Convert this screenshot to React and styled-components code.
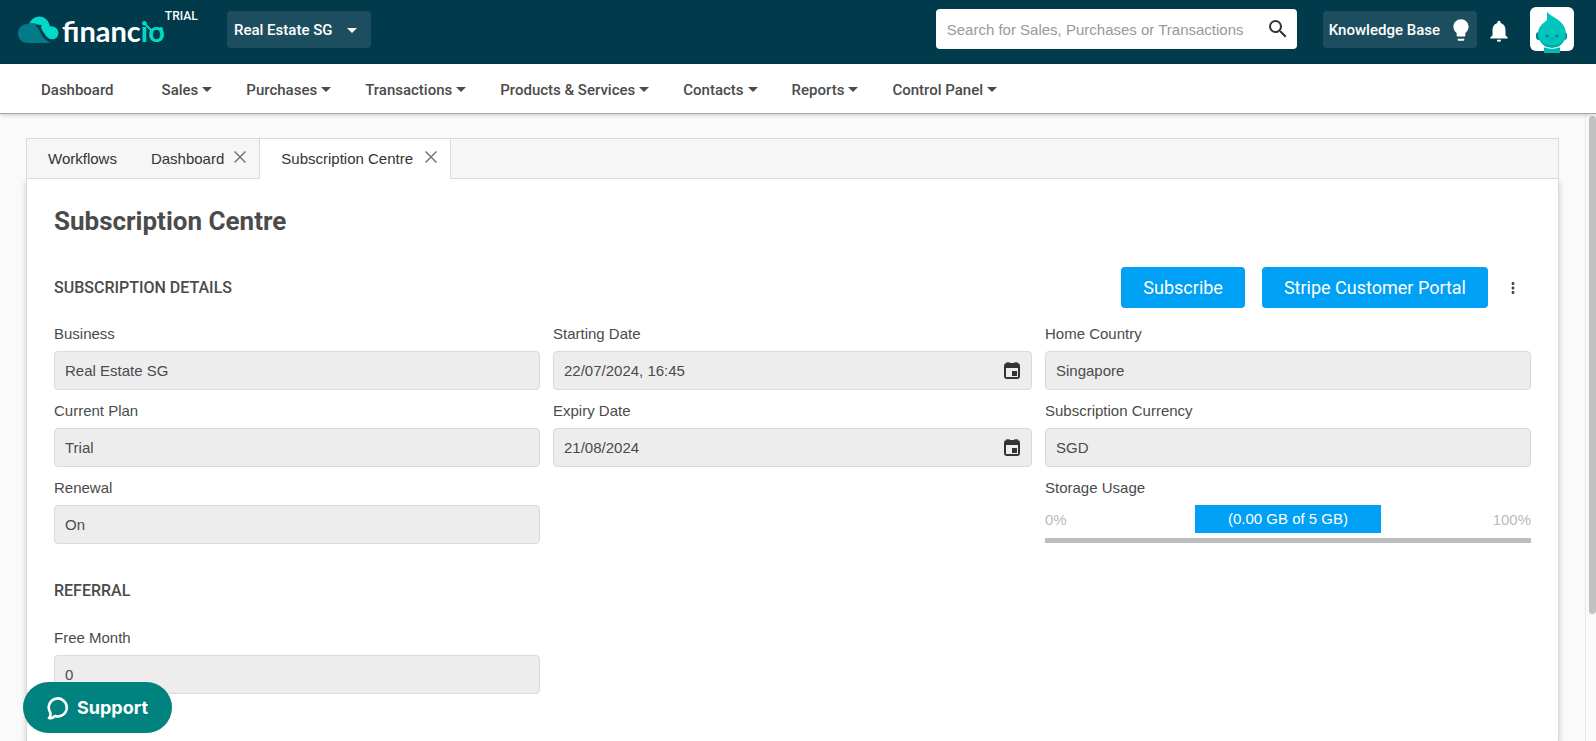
import React from "react";
import { styled, createGlobalStyle } from "styled-components";
import {
  MdArrowDropDown,
  MdLightbulb,
  MdMoreVert,
  MdNotifications,
  MdSearch,
} from "react-icons/md";

const MENU = [
  { label: "Dashboard" },
  { label: "Sales", dropdown: true },
  { label: "Purchases", dropdown: true },
  { label: "Transactions", dropdown: true },
  { label: "Products & Services", dropdown: true },
  { label: "Contacts", dropdown: true },
  { label: "Reports", dropdown: true },
  { label: "Control Panel", dropdown: true },
];

const TABS = [
  { label: "Workflows" },
  { label: "Dashboard", closable: true },
  { label: "Subscription Centre", closable: true, active: true },
];

const Logo = () => (
  <LogoLink href="#" aria-label="financio">
    <svg width="42" height="30" viewBox="0 0 42 30">
      <path
        d="M11 11A10.500 10.500 0 0 1 31.500 10.500C31.500 12 32 12.500 33 12.200A7 7 0 0 1 40.500 19C40 26 33 27 29 23C25 19 24 13 18 10.500Z"
        fill="#00d8c8"
      />
      <path
        d="M10 29C4 29 0 25 0 19.500C0 14 4 10 9.500 10C14 8 20 9 23 14C25 20 27 27 33 29Z"
        fill="#007b87"
      />
      <path d="M17 10.500L23.500 11L23 14.500C25 20 28 24.500 34 27C29 29 24 23 22 17Z" fill="#003a4b" />
    </svg>
    <Wordmark>
      financ<em>io</em>
      <svg width="24" height="24" viewBox="0 0 24 24">
        <path d="M4 5L11 12" stroke="#00d8c8" strokeWidth="2" />
        <circle cx="20" cy="10" r="2" fill="#00d8c8" />
      </svg>
    </Wordmark>
    <Plan>TRIAL</Plan>
  </LogoLink>
);

const Avatar = () => (
  <AvatarButton aria-label="Account">
    <svg width="44" height="46" viewBox="0 0 44 46">
      <rect x="6" y="25" width="31" height="8" rx="3" fill="#007f8c" />
      <path
        d="M17 5C23 11 36 14 36 27C36 35 30 40 22 40C14 40 8 35 8 27C8 20 12 17 17 13Z"
        fill="#00c5bd"
      />
      <path d="M10 33C15 40 29 40 34 33C32 38 28 41 22 41C16 41 12 38 10 33Z" fill="#00aaa7" />
      <path d="M14 40Q22 43 30 40V46H14Z" fill="#00b8b4" />
      <path d="M14 40Q22 43 30 40" fill="none" stroke="#bff1ee" strokeWidth="1" />
      <circle cx="17" cy="29" r="1.500" fill="#00828b" />
      <circle cx="27" cy="29" r="1.500" fill="#00828b" />
      <path d="M20 31Q22 32 24 31" fill="none" stroke="#00a5a3" />
    </svg>
  </AvatarButton>
);

const CalendarIcon = () => (
  <svg width="18" height="18" viewBox="0 0 18 18">
    <path
      d="M4 1H14Q17 1 17 4V14Q17 17 14 17H4Q1 17 1 14V4Q1 1 4 1ZM3 6V15H15V6Z"
      fill="#333333"
      fillRule="evenodd"
    />
    <path d="M3 1Q5 -1 7 1M11 1Q13 -1 15 1" stroke="#555555" fill="none" />
    <rect x="9" y="9" width="5" height="5" fill="#333333" />
  </svg>
);

const CloseIcon = () => (
  <svg width="12" height="12" viewBox="0 0 12 12">
    <path d="M0.500 0.500L11.500 11.500M11.500 0.500L0.500 11.500" stroke="#777777" strokeWidth="1.500" />
  </svg>
);

const ChatIcon = () => (
  <svg width="22" height="24" viewBox="0 0 22 24">
    <path
      d="M3 16A9 9 0 1 1 8 20C6 22 4 22.500 2 22C3.500 20.500 4 18.500 3 16Z"
      fill="none"
      stroke="#ffffff"
      strokeWidth="2.600"
      strokeLinejoin="round"
    />
  </svg>
);

const Field = ({ id, label, value, date }) => (
  <FieldGroup>
    <Label htmlFor={id}>{label}</Label>
    <InputBox>
      <input id={id} type="text" value={value} readOnly />
      {date && <CalendarIcon />}
    </InputBox>
  </FieldGroup>
);

export default function App() {
  return (
    <Page>
      <GlobalStyle />
      <TopBar>
        <Logo />
        <CompanyButton>
          Real Estate SG
          <MdArrowDropDown size={24} />
        </CompanyButton>
        <SearchBox>
          <input
            type="text"
            aria-label="Search"
            placeholder="Search for Sales, Purchases or Transactions"
          />
          <IconButton aria-label="Search">
            <MdSearch size={24} color="#333333" />
          </IconButton>
        </SearchBox>
        <KnowledgeButton>
          Knowledge Base
          <MdLightbulb size={26} />
        </KnowledgeButton>
        <IconButton aria-label="Notifications">
          <MdNotifications size={26} color="#ffffff" />
        </IconButton>
        <Avatar />
      </TopBar>

      <Menu>
        {MENU.map(({ label, dropdown }) => (
          <MenuLink key={label} href="#" $dropdown={dropdown}>
            {label}
          </MenuLink>
        ))}
      </Menu>

      <Body>
        <Content>
          <TabBar>
            {TABS.map(({ label, closable, active }) => (
              <Tab key={label} $active={active}>
                <button>{label}</button>
                {closable && (
                  <IconButton aria-label={`Close ${label}`}>
                    <CloseIcon />
                  </IconButton>
                )}
              </Tab>
            ))}
            <TabFiller />
          </TabBar>

          <Panel>
            <Title>Subscription Centre</Title>
            <SectionHeader>
              <SectionTitle>SUBSCRIPTION DETAILS</SectionTitle>
              <Actions>
                <PrimaryButton>Subscribe</PrimaryButton>
                <PrimaryButton>Stripe Customer Portal</PrimaryButton>
                <IconButton aria-label="More options">
                  <MdMoreVert size={18} color="#444444" />
                </IconButton>
              </Actions>
            </SectionHeader>

            <Columns>
              <Column>
                <Field id="business" label="Business" value="Real Estate SG" />
                <Field id="plan" label="Current Plan" value="Trial" />
                <Field id="renewal" label="Renewal" value="On" />
              </Column>
              <Column>
                <Field id="start" label="Starting Date" value="22/07/2024, 16:45" date />
                <Field id="expiry" label="Expiry Date" value="21/08/2024" date />
              </Column>
              <Column>
                <Field id="country" label="Home Country" value="Singapore" />
                <Field id="currency" label="Subscription Currency" value="SGD" />
                <FieldGroup>
                  <Label as="span">Storage Usage</Label>
                  <Usage>
                    <span>0%</span>
                    <UsageBadge>(0.00 GB of 5 GB)</UsageBadge>
                    <span>100%</span>
                  </Usage>
                  <UsageBar role="progressbar" aria-label="Storage Usage" aria-valuenow={0} />
                </FieldGroup>
              </Column>
            </Columns>

            <ReferralTitle>REFERRAL</ReferralTitle>
            <Columns>
              <Column>
                <Field id="free-month" label="Free Month" value="0" />
              </Column>
            </Columns>
          </Panel>
        </Content>
        <ScrollTrack>
          <ScrollThumb />
        </ScrollTrack>
      </Body>

      <SupportButton>
        <ChatIcon />
        Support
      </SupportButton>
    </Page>
  );
}

const GlobalStyle = createGlobalStyle`
  * {
    box-sizing: border-box;
  }
  body {
    margin: 0;
    background: #fafafa;
    color: #4b4b4b;
    font-family: "Liberation Sans", Arial, sans-serif;
    font-size: 15px;
  }
  button,
  input {
    border: 0;
    padding: 0;
    background: none;
    font: inherit;
    color: inherit;
  }
  button {
    cursor: pointer;
  }
  a {
    color: inherit;
    text-decoration: none;
  }
  svg {
    display: block;
    flex-shrink: 0;
  }
`;

const Page = styled.div`
  display: flex;
  flex-direction: column;
  height: 100vh;
  overflow: hidden;
`;

const TopBar = styled.header`
  display: flex;
  align-items: flex-start;
  flex-shrink: 0;
  height: 64px;
  padding: 7px 22px 0 18px;
  background: #003a4b;
  color: #ffffff;
  font-family: Roboto, sans-serif;
`;

const LogoLink = styled.a`
  display: flex;
  align-items: flex-start;
  width: 209px;
  & > svg {
    margin-top: 7px;
  }
`;

const Wordmark = styled.span`
  position: relative;
  margin: 7px 0 0 2px;
  font-family: Lato, sans-serif;
  font-size: 29px;
  font-weight: 700;
  line-height: 34px;
  & em {
    font-style: normal;
    color: #00d8c8;
  }
  & svg {
    position: absolute;
    right: 0;
    top: 5px;
  }
`;

const Plan = styled.span`
  font-size: 12px;
  font-weight: 500;
  line-height: 18px;
`;

const CompanyButton = styled.button`
  display: flex;
  align-items: center;
  gap: 8px;
  height: 37px;
  margin-top: 4px;
  padding: 0 7px;
  border-radius: 4px;
  background: #1d4e5f;
  font-size: 15px;
  font-weight: 500;
`;

const SearchBox = styled.div`
  display: flex;
  align-items: center;
  width: 361px;
  height: 40px;
  margin: 2px 26px 0 auto;
  padding: 0 7px 0 11px;
  border-radius: 4px;
  background: #ffffff;
  font-family: "Liberation Sans", Arial, sans-serif;
  & input {
    flex: 1;
    min-width: 0;
    color: #333333;
    outline: none;
  }
  & input::placeholder {
    color: #999999;
  }
`;

const IconButton = styled.button`
  display: flex;
  align-items: center;
  justify-content: center;
  ${TopBar} > & {
    margin: 11px 18px 0 9px;
  }
`;

const KnowledgeButton = styled(CompanyButton)`
  padding: 0 3px 0 6px;
`;

const AvatarButton = styled.button`
  display: flex;
  align-items: flex-start;
  width: 44px;
  height: 44px;
  border-radius: 6px;
  background: #ffffff;
`;

const Menu = styled.nav`
  position: relative;
  display: flex;
  align-items: center;
  gap: 34px;
  flex-shrink: 0;
  height: 50px;
  padding: 2px 41px 0;
  border-bottom: 1px solid #a5aaa8;
  background: #ffffff;
  box-shadow: 0 1px 4px rgba(0, 0, 0, 0.2);
  font-family: Roboto, sans-serif;
  font-size: 15px;
  font-weight: 500;
`;

const MenuLink = styled.a`
  display: flex;
  align-items: center;
  gap: 4px;
  &::after {
    content: "";
    border: 5px solid transparent;
    border-top-color: ${({ $dropdown }) => ($dropdown ? "#4b4b4b" : "transparent")};
    border-bottom: 0;
  }
`;

const Body = styled.div`
  display: flex;
  flex: 1;
  min-height: 0;
`;

const Content = styled.main`
  display: flex;
  flex-direction: column;
  flex: 1;
  padding: 24px 26px 0;
`;

const TabBar = styled.div`
  display: flex;
  position: relative;
  flex-shrink: 0;
  height: 41px;
  border: 1px solid #dadada;
  border-bottom: 0;
  color: #333333;
`;

const Tab = styled.div`
  display: flex;
  align-items: center;
  gap: ${({ $active }) => ($active ? "12px" : "10px")};
  padding: 0 13px 0 21px;
  background: ${({ $active }) => ($active ? "#ffffff" : "#f6f6f6")};
  border: solid #dadada;
  border-width: ${({ $active }) => ($active ? "0 1px 1px" : "0 0 1px")};
  border-bottom-color: ${({ $active }) => ($active ? "#ffffff" : "#dadada")};
  & + & {
    padding-left: ${({ $active }) => ($active ? "21px" : "18px")};
  }
  & ${IconButton} {
    padding-bottom: 4px;
  }
`;

const TabFiller = styled.div`
  flex: 1;
  border-bottom: 1px solid #dadada;
  background: #f6f6f6;
`;

const Panel = styled.section`
  flex: 1 0 auto;
  padding: 26px 27px;
  border: solid #dadada;
  border-width: 0 1px;
  background: #ffffff;
  box-shadow: 0 3px 6px rgba(0, 0, 0, 0.2);
`;

const Title = styled.h1`
  margin: 0;
  font-family: Roboto, sans-serif;
  font-size: 26px;
  font-weight: 700;
  line-height: 32px;
`;

const SectionHeader = styled.div`
  display: flex;
  align-items: center;
  justify-content: space-between;
  margin-top: 30px;
`;

const SectionTitle = styled.h2`
  margin: 0;
  font-family: Roboto, sans-serif;
  font-size: 16px;
  font-weight: 500;
  line-height: 20px;
`;

const ReferralTitle = styled(SectionTitle)`
  margin: 37px 0 26px;
`;

const Actions = styled.div`
  display: flex;
  align-items: center;
  gap: 17px;
  padding-right: 9px;
  & > ${IconButton} {
    margin-left: -1px;
  }
`;

const PrimaryButton = styled.button`
  height: 41px;
  padding: 0 22px;
  border-radius: 4px;
  background: #00a0f4;
  color: #ffffff;
  font-family: Roboto, sans-serif;
  font-size: 18px;
`;

const Columns = styled.div`
  display: grid;
  grid-template-columns: 486fr 479fr 486fr;
  gap: 13px;
  margin-top: 15px;
`;

const Column = styled.div`
  display: flex;
  flex-direction: column;
  gap: 10px;
`;

const FieldGroup = styled.div`
  display: flex;
  flex-direction: column;
`;

const Label = styled.label`
  margin-bottom: 7px;
  line-height: 21px;
`;

const InputBox = styled.div`
  display: flex;
  align-items: center;
  height: 39px;
  padding: 0 10px;
  border: 1px solid #dadada;
  border-radius: 4px;
  background: #ededed;
  & input {
    flex: 1;
    min-width: 0;
    outline: none;
  }
`;

const Usage = styled.div`
  display: flex;
  align-items: center;
  justify-content: space-between;
  color: #bbbbbb;
  & > span {
    flex: 1;
  }
  & > span:last-child {
    text-align: right;
  }
`;

const UsageBadge = styled.div`
  padding: 0 33px;
  background: #00a0f4;
  color: #ffffff;
  line-height: 28px;
`;

const UsageBar = styled.div`
  height: 5px;
  margin-top: 5px;
  background: #bdbdbd;
`;

const ScrollTrack = styled.div`
  width: 11px;
  padding: 2px 0 2px 3px;
  border-left: 1px solid #e8e8e8;
`;

const ScrollThumb = styled.div`
  height: 80%;
  border-radius: 4px;
  background: #c1c1c1;
`;

const SupportButton = styled.button`
  position: fixed;
  left: 23px;
  bottom: 8px;
  display: flex;
  align-items: center;
  gap: 8px;
  height: 51px;
  padding: 0 24px;
  border-radius: 26px;
  background: #00827f;
  color: #ffffff;
  font-family: Inter, sans-serif;
  font-size: 18px;
  font-weight: 700;
`;
